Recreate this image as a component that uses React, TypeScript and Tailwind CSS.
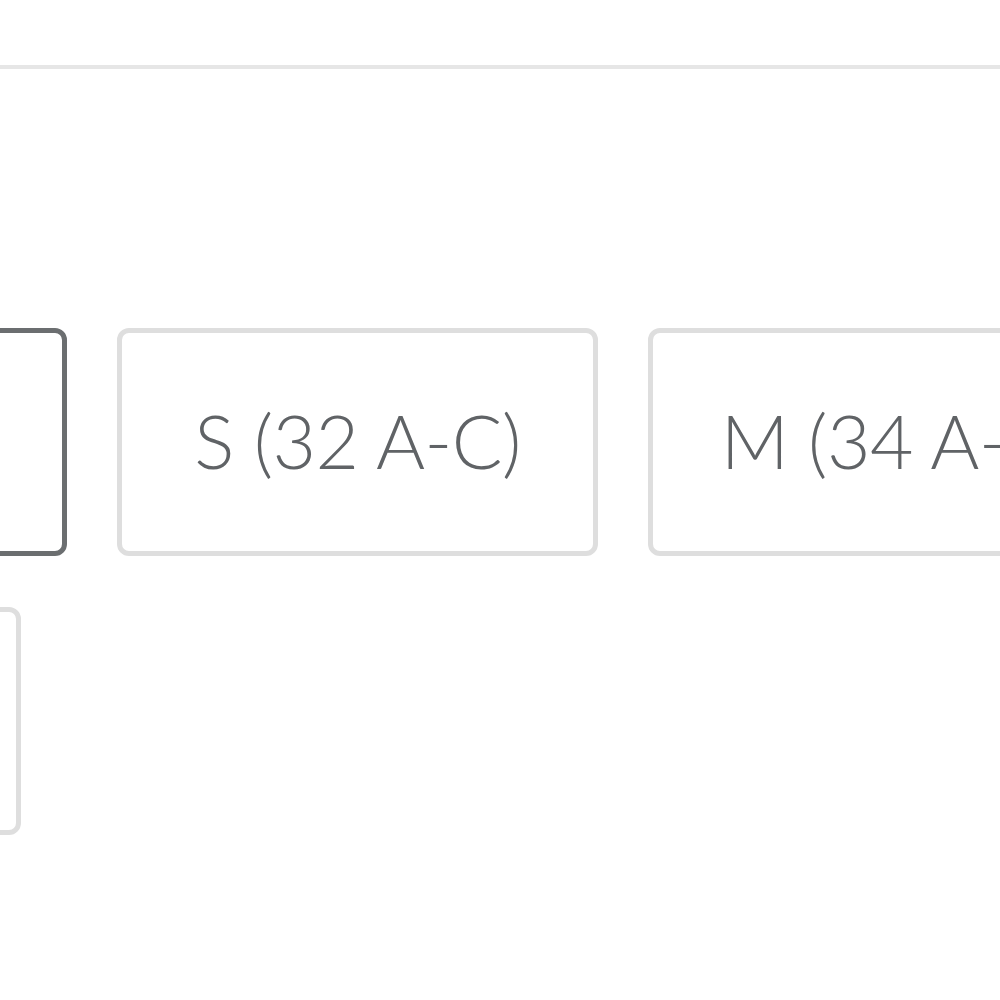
import React, { useState } from "react";

const sizes = [
  { id: "xs", label: "XS (30 A-C)", w: "w-[527px]" },
  { id: "s", label: "S (32 A-C)", w: "w-[481px]" },
  { id: "m", label: "M (34 A-C)", w: "w-[500px]" },
  { id: "l", label: "L (36 A-C)", w: "w-[481px]" },
];

const App: React.FC = () => {
  const [selected, setSelected] = useState("xs");

  return (
    <div className="min-h-screen w-[1000px] overflow-hidden bg-white font-['Lato','Liberation_Sans',sans-serif]">
      <div className="h-[69px] border-b-4 border-[#e6e6e6]" />
      <div className="mt-[259px] -ml-[460px] flex w-[1700px] flex-wrap gap-x-[50px] gap-y-[51px]">
        {sizes.map(s => (
          <button
            key={s.id}
            onClick={() => setSelected(s.id)}
            className={`${s.w} flex h-[228px] shrink-0 items-center justify-center rounded-[12px] border-[5px] bg-white pb-[4px] text-[75px] font-light leading-none tracking-[-0.5px] text-[#606366] ${selected === s.id ? "border-[#6b6e70]" : "border-[#dedede]"}`}
          >
            {s.label}
          </button>
        ))}
      </div>
    </div>
  );
};

export default App;
